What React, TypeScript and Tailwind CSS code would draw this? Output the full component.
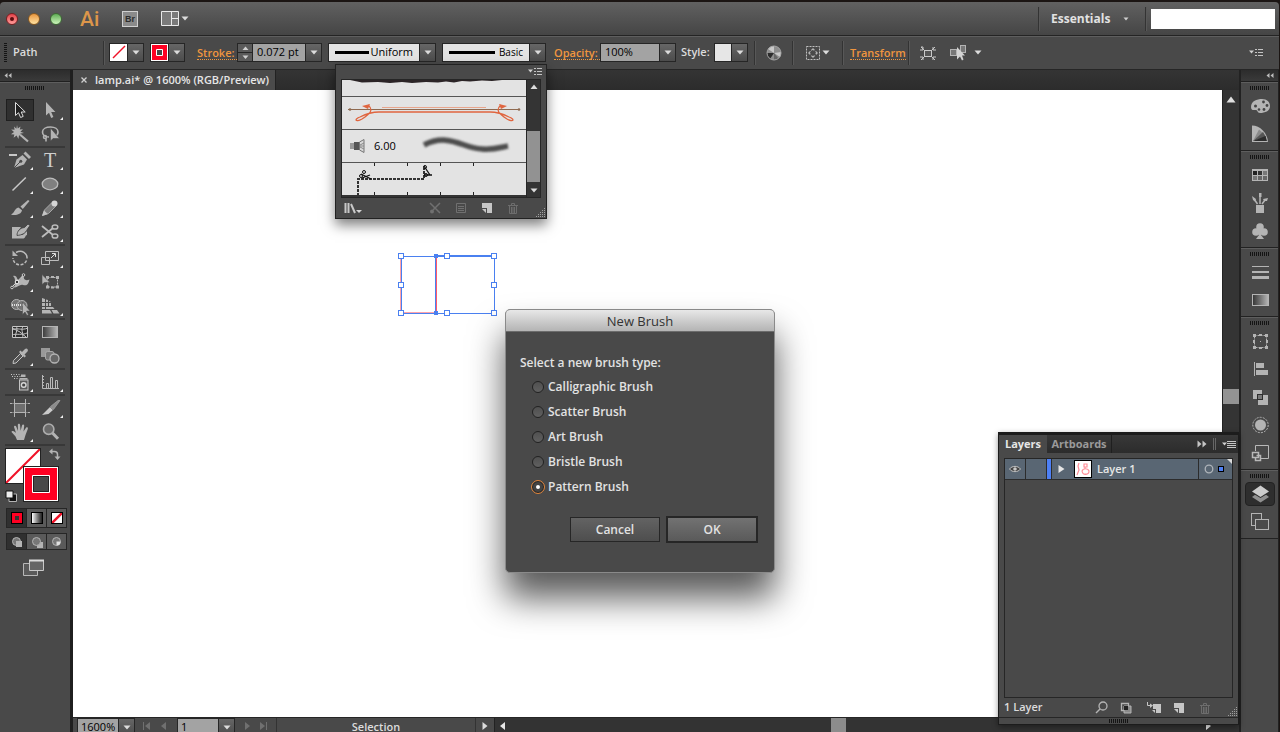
import { useState, type ReactNode } from "react";
import clsx from "clsx";

type IconProps = { w?: number; h?: number; children: ReactNode };

function Icon({ w = 24, h = 20, children }: IconProps) {
  return (
    <svg
      width={w}
      height={h}
      viewBox={`0 0 ${w} ${h}`}
      fill="#b4b4b4"
      aria-hidden="true"
      className="block shrink-0"
    >
      {children}
    </svg>
  );
}

function Down({ color = "#dcdcdc" }: { color?: string }) {
  return (
    <Icon w={8} h={5}>
      <path d="M0.5 0.5H7.5L4 4.5Z" fill={color} />
    </Icon>
  );
}

function MenuIcon() {
  return (
    <Icon w={14} h={9}>
      <path d="M0 2.5H5L2.5 5.5Z" fill="#d0d0d0" />
      <path d="M6 1.5H14M6 4.5H14M6 7.5H14" stroke="#c4c4c4" />
      <path d="M8.5 0V9" stroke="#494949" />
    </Icon>
  );
}

function Grip() {
  return (
    <Icon w={20} h={4}>
      <path d="M0 2H20" stroke="#141414" strokeWidth="4" strokeDasharray="1 1" />
    </Icon>
  );
}

function ResizeGrip() {
  return (
    <Icon w={10} h={10}>
      <path
        d="M9 1.5H10M7 3.5H10M5 5.5H10M3 7.5H10M1 9.5H10"
        stroke="#a0a0a0"
        strokeDasharray="1 1"
      />
    </Icon>
  );
}

function NewIcon() {
  return (
    <Icon w={12} h={12}>
      <path d="M1 1H11V11H6V6H1Z" fill="#c6c6c6" />
      <path d="M1 7H5V11Z" fill="#c6c6c6" />
    </Icon>
  );
}

function TrashIcon() {
  return (
    <Icon w={12} h={12}>
      <path d="M1 3.5H11M4.5 3V1.5H7.5V3M2.5 4V11.5H9.5V4M4.5 5V11M6 5V11M7.5 5V11" stroke="#6d6d6d" fill="none" />
    </Icon>
  );
}

/* Tool drawings */

const tools: Record<string, ReactNode> = {
  Selection: (
    <path d="M7.5 2.5V15.5L10.5 12.7L12.6 17.5L15.2 16.4L13.2 12H17.2Z" fill="#222" stroke="#dedede" />
  ),
  "Direct Selection": <path d="M8 2V15.5L11 12.8L13.2 18L15.4 17L13.2 12H17.4Z" />,
  "Magic Wand": (
    <>
      <path d="M9 1L9.8 4.5L12.5 2.5L11.8 5.6L15 5.2L12.4 7.7L16 9L12.3 9.6L14 12.6L11 11.2L10.4 15L8.6 11.6L5.6 13.8L6.4 10.4L3 10.2L6 8L3.2 5.4L6.6 5.8L6 2.4L8.4 4.8Z" />
      <path d="M12.5 11L20 17.5" stroke="#b4b4b4" strokeWidth="2.2" />
    </>
  ),
  Lasso: (
    <>
      <path d="M11 13C6 13 4.500 10 4.500 8C4.500 5 8 3 12.500 3C17 3 20 5 20 8C20 10 19 11.500 17 12.500M7 11.500C5 11.500 5 14.500 7 14.500C9 14.500 9 11.500 7 11.500M8 14.500V17.500" fill="none" stroke="#b4b4b4" strokeWidth="1.6" />
      <path d="M12.500 4V17L15 14.500H21.500Z" stroke="#494949" strokeWidth="0.6" />
    </>
  ),
  Pen: (
    <>
      <path d="M1 5H9" stroke="#c8c8c8" strokeWidth="2" />
      <path d="M6 18L8.500 9.500L14.500 5L19 9.500L16 14.500Z" />
      <path d="M15.500 3.500L17.500 1.500L23 7L21 9Z" />
      <path d="M6 18L12 12" stroke="#494949" />
      <circle cx="12.800" cy="11.200" r="1.500" fill="#494949" />
    </>
  ),
  "Line Segment": <path d="M4.500 16.500L17.800 3.500" stroke="#c8c8c8" strokeWidth="1.500" />,
  Ellipse: <ellipse cx="12" cy="10" rx="7.800" ry="5.800" fill="#808080" stroke="#bdbdbd" strokeWidth="1.300" />,
  Paintbrush: (
    <>
      <path d="M12.500 8.500L20 2L21.500 3L14.800 11Z" />
      <path d="M3 16.500C6.500 15 6.500 10.500 10.500 9.500L14 12.300C13.500 16.500 7 18 3 16.500Z" />
    </>
  ),
  Pencil: (
    <>
      <path d="M4.500 17.500L6.500 12L14 4.500L18 8L10.500 15.500Z" fill="#7c7c7c" stroke="#a8a8a8" />
      <path d="M4 18L6 12.500L9.800 16Z" fill="#c4c4c4" />
      <circle cx="16.500" cy="5.500" r="3" fill="#d6d6d6" />
    </>
  ),
  "Blob Brush": (
    <>
      <path d="M4 5H13L10 9.500V13H14.500L19 9V13C17 13 18 17 14 16.500H4V10Z" />
      <path d="M9 13.500C9 9 12 6 16.500 5.500L20 2L22 3.500L19.500 7C17.500 11.500 14 13 9 13.500Z" stroke="#3c3c3c" strokeWidth="0.800" />
    </>
  ),
  Scissors: (
    <>
      <path d="M4 4L15 13M4 15L15 6" stroke="#bcbcbc" strokeWidth="1.800" />
      <ellipse cx="17" cy="5" rx="2.800" ry="2.100" fill="none" stroke="#bcbcbc" strokeWidth="1.500" />
      <ellipse cx="17" cy="14" rx="2.800" ry="2.100" fill="none" stroke="#bcbcbc" strokeWidth="1.500" />
    </>
  ),
  Rotate: (
    <>
      <path d="M8 4.500C14 1 19.500 5.500 19 10.500" fill="none" stroke="#bcbcbc" strokeWidth="1.500" />
      <path d="M18.500 12.500C16 18.500 5.500 18.500 5 10" fill="none" stroke="#bcbcbc" strokeWidth="1.500" strokeDasharray="3 1.500" />
      <path d="M4.500 2.500V8H10Z" />
    </>
  ),
  Scale: (
    <>
      <path d="M7.500 3.500H20.500V12.500H7.500ZM3.500 9.500H11.500V16.500H3.500Z" fill="none" stroke="#bdbdbd" />
      <path d="M13 10L17 6M14 5.500H17.500V9" fill="none" stroke="#dedede" />
    </>
  ),
  Width: (
    <>
      <path d="M5 4C10 3 8 8 11 8C13 8 13 4 16 3C15 8 18 9 21.500 7.500C20 13 19 14 15 13C11 12 9 17 5 15C8 14 7 12 7 10C7 7 7 6 5 4Z" />
      <path d="M4 15L15 3.500" stroke="#e2e2e2" />
      <circle cx="9" cy="10" r="1.800" fill="#333" stroke="#eee" />
      <circle cx="4" cy="15.500" r="1.300" fill="#333" stroke="#ccc" />
      <circle cx="15.500" cy="3" r="1.300" fill="#333" stroke="#ccc" />
    </>
  ),
  "Free Transform": (
    <>
      <rect x="9.500" y="5.500" width="10" height="9.500" fill="none" stroke="#b4b4b4" strokeDasharray="2 1" />
      <path d="M8 4H11V7H8ZM18 4H21V7H18ZM18 13.500H21V16.500H18ZM8 13.500H11V16.500H8ZM13 4H16V6H13ZM13 14.500H16V16.500H13Z" />
      <path d="M4 2.500V12.500L6.500 10.500H12Z" stroke="#494949" strokeWidth="0.600" />
    </>
  ),
  "Shape Builder": (
    <>
      <circle cx="8.500" cy="8.500" r="5" fill="#757575" stroke="#b4b4b4" />
      <circle cx="14" cy="9.500" r="5" fill="#757575" stroke="#b4b4b4" />
      <path d="M4 9H15" stroke="#fff" strokeWidth="1.500" strokeDasharray="1 1" />
      <path d="M14.500 6V18.500L17 16L19 19.500L20.500 18.500L18.500 15H22Z" stroke="#494949" strokeWidth="0.500" />
    </>
  ),
  "Perspective Grid": (
    <>
      <path d="M4 2L7 3V13H4ZM8 3.500L10 4V13H8ZM11 5L13 6V10H11Z" />
      <path d="M4 6.500H14M4 10.500H10" stroke="#494949" />
      <path d="M4 14H12L14 17.500H4ZM9 11H15L16.500 13H10ZM13.500 14H19L21.500 17.500H15.500Z" />
    </>
  ),
  Mesh: (
    <>
      <rect x="4" y="4" width="16" height="12" fill="#2c2c2c" />
      <path d="M4.500 4.500H19.500V15.500H4.500ZM4 8C9 5 13 9 20 6M4 13C8 11 14 14 20 10.500M8 4C11 8 6 12 8 16M16 4C11 7 17 12 14 16M4 6L12 10L18 15" fill="none" stroke="#c6c6c6" />
    </>
  ),
  Gradient: (
    <>
      <linearGradient id="toolGradient">
        <stop offset="0" stopColor="#3a3a3a" />
        <stop offset="1" stopColor="#b8b8b8" />
      </linearGradient>
      <rect x="4.500" y="4.500" width="15" height="11" fill="url(#toolGradient)" stroke="#b4b4b4" />
    </>
  ),
  Eyedropper: (
    <>
      <path d="M5 17.500L5.500 14.500L12.500 7.500L15 10L8 17Z" fill="#555" stroke="#c4c4c4" />
      <path d="M11 6L12.500 4.500L14 6L17 3C18.500 1.500 21 3.500 19.500 5.500L16.500 8.500L18 10L16.500 11.500Z" />
    </>
  ),
  Blend: (
    <>
      <path d="M3 2H12V11H3Z" fill="#999" />
      <rect x="7.500" y="5.500" width="8.500" height="8.500" rx="2" fill="#777" stroke="#a8a8a8" />
      <circle cx="16.500" cy="12.500" r="4.500" fill="#666" stroke="#b4b4b4" strokeWidth="1.300" />
    </>
  ),
  "Symbol Sprayer": (
    <>
      <path d="M3 2.500H12M4 4.500H13M6 6.500H11" stroke="#c8c8c8" strokeDasharray="1 1.500" />
      <path d="M13 2.500H17.500V5H13ZM11.500 6H19.500V7.500H11.500Z" />
      <rect x="11.500" y="8" width="8.500" height="10" fill="#5c5c5c" stroke="#c4c4c4" />
      <circle cx="15.700" cy="13" r="2.300" fill="#444" stroke="#d6d6d6" strokeWidth="1.400" />
    </>
  ),
  "Column Graph": (
    <>
      <path d="M4.500 3V16.500H21M8.500 16V11.500H10.500V16M12.500 16V5.500H14.500V16M17.500 16V8.500H19.500V16" fill="none" stroke="#b8b8b8" />
      <path d="M4 4.500H6M4 7.500H6M4 10.500H6M4 13.500H6" stroke="#b8b8b8" />
    </>
  ),
  Artboard: (
    <>
      <path d="M6 5H18V15H6Z" fill="#6e6e6e" />
      <path d="M2 5.500H22M2 14.500H22M6.500 1V19M17.500 1V19" stroke="#b4b4b4" />
      <path d="M4.500 5H5.500M4.500 15H5.500M18.500 5H19.500M18.500 15H19.500" stroke="#494949" strokeWidth="3" />
    </>
  ),
  Slice: (
    <>
      <path d="M4 17L12 9L15 12L10.500 16Z" fill="#cacaca" />
      <path d="M12.500 8.500L20 2.500H22L15.500 11.500Z" fill="#8c8c8c" stroke="#b0b0b0" strokeWidth="0.600" />
    </>
  ),
  Hand: (
    <path d="M9 18L7.500 14.500L3.500 10C3.500 8.500 5.500 8.500 8 11L6 5C6 3.500 7.800 3.200 8.300 4.800L10 9L9.800 3C9.800 1.400 12 1.400 12.100 3L12.600 8.800L14 3.400C14.500 2 16.400 2.500 16.200 4L15.500 9.500L18 5.800C19 4.800 20.300 5.600 19.800 6.900L17.500 13L16 18Z" />
  ),
  Zoom: (
    <>
      <path d="M14 10.500L20 16.800" stroke="#b4b4b4" strokeWidth="3" />
      <circle cx="10.700" cy="7.200" r="5.200" fill="#6a6a6a" stroke="#adadad" strokeWidth="1.600" />
    </>
  ),
};

const toolGroups: string[][] = [
  ["Selection", "Direct Selection", "Magic Wand", "Lasso"],
  ["Pen", "Type", "Line Segment", "Ellipse", "Paintbrush", "Pencil", "Blob Brush", "Scissors"],
  ["Rotate", "Scale", "Width", "Free Transform", "Shape Builder", "Perspective Grid"],
  ["Mesh", "Gradient", "Eyedropper", "Blend"],
  ["Symbol Sprayer", "Column Graph"],
  ["Artboard", "Slice", "Hand", "Zoom"],
];

const noFlyout = [
  "Selection",
  "Magic Wand",
  "Lasso",
  "Blob Brush",
  "Free Transform",
  "Mesh",
  "Gradient",
  "Blend",
  "Artboard",
  "Zoom",
];

/* Dock drawings */

const dockGroups: { name: string; icon: ReactNode }[][] = [
  [
    {
      name: "Color",
      icon: (
        <>
          <path d="M1 11C1 5 7 3 12 3C17 3 20 6 20 10C20 15 15 17 10 17C7 17 8 14 6 14C4 14 1 15 1 11Z" />
          <g fill="#444">
            <circle cx="5.500" cy="10" r="1.500" />
            <circle cx="9" cy="13.500" r="1.300" />
            <circle cx="14" cy="13.500" r="1.400" />
            <circle cx="17" cy="9.500" r="1.400" />
            <circle cx="13.500" cy="6" r="1.400" />
          </g>
        </>
      ),
    },
    {
      name: "Color Guide",
      icon: (
        <>
          <path d="M2 1.500C10 1.500 17.500 9 18 18H2Z" />
          <path d="M3 17L9 5.500L13 9Z" fill="#8a8a8a" />
          <path d="M3 17L13 8L16 13Z" fill="#555" />
          <path d="M3 17L15.500 12L17 17Z" fill="#2c2c2c" />
        </>
      ),
    },
  ],
  [
    {
      name: "Swatches",
      icon: (
        <>
          <path d="M2 4H18V16H2Z" />
          <path d="M3 6H7V10H3Z" fill="#222" />
          <path d="M8 6H12V10H8Z" fill="#333" />
          <path d="M13 6H17V10H13ZM3 11H7V15H3Z" fill="#777" />
          <path d="M8 11H12V15H8ZM13 11H17V15H13Z" fill="#666" />
        </>
      ),
    },
    {
      name: "Brushes",
      icon: (
        <>
          <path d="M6 12H14V20H6Z" />
          <path d="M7.500 11L4 6M10 11V3M12 11L15 7" stroke="#b4b4b4" strokeWidth="1.500" />
          <path d="M2 3L6 6L5 8.500L3 7ZM9 0H11.500V4H9ZM13 6L18 5L17 8H14Z" />
        </>
      ),
    },
    {
      name: "Symbols",
      icon: (
        <>
          <circle cx="10" cy="6" r="3.800" />
          <circle cx="6" cy="11" r="3.800" />
          <circle cx="14" cy="11" r="3.800" />
          <path d="M8 8H12L11 14L14 18H6L9 14Z" />
        </>
      ),
    },
  ],
  [
    { name: "Stroke", icon: <path d="M2 4H19V5H2ZM2 9H19V11H2ZM2 14H19V17H2Z" /> },
    {
      name: "Gradient",
      icon: (
        <>
          <linearGradient id="dockGradient">
            <stop offset="0" stopColor="#333" />
            <stop offset="1" stopColor="#b8b8b8" />
          </linearGradient>
          <rect x="2.500" y="4.500" width="16" height="11" fill="url(#dockGradient)" stroke="#b4b4b4" />
        </>
      ),
    },
  ],
  [
    {
      name: "Transform",
      icon: (
        <>
          <rect x="4.500" y="4.500" width="12" height="12" fill="none" stroke="#b4b4b4" strokeDasharray="2 1" />
          <path d="M3 3H6V6H3ZM9 3H12V5H9ZM15 3H18V6H15ZM3 15H6V18H3ZM9 16H12V18H9ZM15 15H18V18H15ZM3 9H5V12H3ZM16 9H18V12H16ZM10 10H11V11H10Z" />
        </>
      ),
    },
    { name: "Align", icon: <path d="M4 3H5V17H4ZM6 4H14V9H6ZM6 11H18V16H6Z" /> },
    {
      name: "Pathfinder",
      icon: (
        <>
          <path d="M3 3H12V12H3ZM8 8H18V18H8Z" />
          <rect x="7.500" y="7.500" width="5" height="5" fill="#777" stroke="#2c2c2c" />
        </>
      ),
    },
    {
      name: "Appearance",
      icon: (
        <>
          <circle cx="10.500" cy="10" r="5.500" />
          <circle cx="10.500" cy="10" r="7.700" fill="none" stroke="#b4b4b4" strokeDasharray="2 1.200" />
        </>
      ),
    },
    {
      name: "Graphic Styles",
      icon: (
        <>
          <path d="M5.500 8V2.500H18.500V15.500H11" fill="none" stroke="#b8b8b8" />
          <path d="M2.500 9.500H8.500V14.500H2.500ZM6.500 12.500H10.500V17.500H5.500V14" fill="none" stroke="#b8b8b8" strokeWidth="1.500" />
        </>
      ),
    },
  ],
  [
    {
      name: "Layers",
      icon: (
        <>
          <path d="M2 13L5 10.800L10.500 14L16 10.800L19 13L10.500 18.500Z" fill="#909090" />
          <path d="M10.500 1.500L19 7.500L10.500 13L2 7.500Z" fill="#cdcdcd" />
        </>
      ),
    },
    {
      name: "Artboards",
      icon: (
        <>
          <rect x="1.500" y="1.500" width="10" height="12" fill="none" stroke="#b4b4b4" />
          <rect x="5.500" y="7.500" width="13" height="10" fill="#4a4a4a" stroke="#b4b4b4" />
        </>
      ),
    },
  ],
];

function DropButton({ label }: { label: string }) {
  return (
    <button
      aria-label={label}
      className="flex h-full w-4 shrink-0 items-center justify-center border-l border-[#262626] bg-linear-to-b from-[#666] to-[#4c4c4c]"
    >
      <Down />
    </button>
  );
}

function Divider() {
  return <span className="block h-6 w-[2px] shrink-0 border-l border-[#333] bg-[#585858]" />;
}

function PanelLink({ children }: { children: ReactNode }) {
  return (
    <a href="#" className="mt-px block shrink-0 border-b border-dotted border-[#f0963f] leading-[13px] text-[#f0963f]">
      {children}
    </a>
  );
}

function TitleBar() {
  return (
    <header className="flex h-[34px] shrink-0 items-center rounded-t border-b border-[#242424] bg-linear-to-b from-[#616161] to-[#454545] pl-1.5">
      <div className="flex gap-[10px]">
        <button aria-label="Close" className="flex size-3 items-center justify-center rounded-full border border-[#7a1f22] bg-linear-to-b from-[#e23f48] to-[#ff9a9a]">
          <span className="size-1 rounded-full bg-[#5b0c10]" />
        </button>
        <button aria-label="Minimize" className="size-3 rounded-full border border-[#8a5a22] bg-linear-to-b from-[#e8963c] to-[#ffe2a0]" />
        <button aria-label="Zoom" className="size-3 rounded-full border border-[#3d6a34] bg-linear-to-b from-[#5fae55] to-[#cdf5bc]" />
      </div>
      <span className="ml-[18px] w-6 font-['Roboto',sans-serif] text-[21px] leading-[30px] font-medium text-[#dd964a]">
        Ai
      </span>
      <button className="ml-[18px] flex size-4 items-center justify-center border border-[#d0d0d0] bg-[#8b8b8b] font-['Liberation_Sans',sans-serif] text-[9px] leading-3 font-bold text-[#2e2e2e]">
        Br
      </button>
      <button aria-label="Arrange Documents" className="ml-[23px] flex items-center gap-[2px]">
        <Icon w={18} h={15}>
          <path d="M0.500 0.500H17.500V14.500H0.500Z" fill="#7b7b7b" stroke="#eaeaea" />
          <path d="M10.500 1V14M10.500 7.500H17" stroke="#eaeaea" />
        </Icon>
        <Down />
      </button>
      <div className="ml-auto flex items-center">
        <Divider />
        <select
          aria-label="Workspace"
          className="ml-[11px] w-[68px] appearance-none text-[12px] leading-4 font-bold text-[#e2e2e2]"
        >
          <option>Essentials</option>
        </select>
        <span className="ml-1">
          <Icon w={6} h={4}>
            <path d="M0.500 0.500H5.500L3 3.500Z" fill="#d0d0d0" />
          </Icon>
        </span>
        <span className="ml-4">
          <Divider />
        </span>
        <input aria-label="Search" className="mr-1 ml-1 h-5 w-[124px] bg-white px-1 text-[11px] text-black outline-none" />
      </div>
    </header>
  );
}

function ControlBar() {
  return (
    <div className="flex h-[34px] shrink-0 items-center border-t border-b border-t-[#5e5e5e] border-b-[#262626] bg-[#494949] pb-px pl-1 text-[11px] font-semibold text-[#dcdcdc]">
      <Icon w={3} h={19}>
        <path d="M1.500 0V19" stroke="#141414" strokeWidth="3" strokeDasharray="1 1" />
      </Icon>
      <span className="ml-1.5 w-[90px] shrink-0">Path</span>
      <Divider />
      <div className="ml-1 flex h-[19px] w-[35px] shrink-0 border border-[#262626]">
        <span className="w-[17px] bg-white">
          <Icon w={17} h={17}>
            <path d="M3 14L15 2" stroke="#f01228" strokeWidth="1.500" />
          </Icon>
        </span>
        <DropButton label="Fill" />
      </div>
      <div className="ml-1.5 flex h-[19px] w-[35px] shrink-0 border border-[#262626]">
        <span className="w-[17px] bg-white">
          <Icon w={17} h={17}>
            <path d="M1 1H16V16H1Z" fill="#ff0022" />
            <path d="M5.500 5.500H11.500V11.500H5.500Z" fill="#494949" stroke="#fff" />
          </Icon>
        </span>
        <DropButton label="Stroke colour" />
      </div>
      <span className="ml-3 w-10 shrink-0">
        <PanelLink>Stroke:</PanelLink>
      </span>
      <div className="flex h-[19px] w-[85px] shrink-0 border border-[#262626]">
        <div className="flex w-[15px] shrink-0 flex-col border-r border-[#262626] bg-[#5a5a5a]">
          <button aria-label="Increase stroke" className="flex h-[9px] items-center justify-center border-b border-[#262626]">
            <Icon w={7} h={4}>
              <path d="M0.500 4H6.500L3.500 0.500Z" fill="#d0d0d0" />
            </Icon>
          </button>
          <button aria-label="Decrease stroke" className="flex h-2 items-center justify-center">
            <Icon w={7} h={4}>
              <path d="M0.500 0.500H6.500L3.500 4Z" fill="#d0d0d0" />
            </Icon>
          </button>
        </div>
        <input aria-label="Stroke weight" defaultValue="0.072 pt" className="w-[52px] bg-[#a3a3a3] pl-1 text-[11px] font-normal text-black outline-none" />
        <DropButton label="Stroke weight presets" />
      </div>
      <div className="ml-1.5 flex h-[19px] w-[108px] shrink-0 border border-[#262626] bg-[#e3e3e3]">
        <span className="mt-[7px] ml-1.5 h-[3px] w-[34px] shrink-0 bg-black" />
        <select aria-label="Width profile" className="flex-1 appearance-none pr-1.5 text-right text-[11px] font-normal text-black">
          <option>Uniform</option>
        </select>
        <DropButton label="Width profiles" />
      </div>
      <div className="ml-1.5 flex h-[19px] w-[104px] shrink-0 border border-[#262626] bg-[#e3e3e3]">
        <span className="mt-[7px] ml-1.5 h-[3px] w-[46px] shrink-0 bg-black" />
        <select aria-label="Brush definition" className="flex-1 appearance-none pr-1.5 text-right text-[10px] font-normal text-black">
          <option>Basic</option>
        </select>
        <DropButton label="Brushes" />
      </div>
      <span className="ml-2 w-[46px] shrink-0">
        <PanelLink>Opacity:</PanelLink>
      </span>
      <div className="flex h-[19px] w-[76px] shrink-0 border border-[#262626]">
        <input aria-label="Opacity" defaultValue="100%" className="min-w-0 flex-1 bg-[#a3a3a3] pl-1 text-[11px] font-normal text-black outline-none" />
        <DropButton label="Opacity presets" />
      </div>
      <span className="ml-[5px] w-[33px] shrink-0">Style:</span>
      <div className="flex h-[19px] w-[34px] shrink-0 border border-[#262626]">
        <span className="w-[16px] bg-[#e6e6e6]" />
        <DropButton label="Graphic style" />
      </div>
      <div className="flex flex-1 items-center pl-1.5">
        <Divider />
        <button aria-label="Recolor Artwork" className="ml-[10px]">
          <Icon w={16} h={16}>
            <circle cx="8" cy="8" r="7" fill="#8d8d8d" />
            <path d="M8 8L2 4A7 7 0 0 1 8 1ZM8 8L14 12A7 7 0 0 0 15 7Z" fill="#c8c8c8" />
            <path d="M8 8L4 14A7 7 0 0 1 1 8Z" fill="#2c2c2c" />
            <path d="M8 8V15A7 7 0 0 0 12.500 13.500Z" fill="#666" />
            <circle cx="8" cy="8" r="7" fill="none" stroke="#a4a4a4" />
          </Icon>
        </button>
        <span className="ml-[10px]">
          <Divider />
        </span>
        <button aria-label="Align To" className="ml-3 flex items-center gap-[2px]">
          <Icon w={14} h={14}>
            <rect x="0.500" y="0.500" width="13" height="13" fill="none" stroke="#c0c0c0" strokeDasharray="2 1" />
            <path d="M7 2L9 4H5ZM7 12L9 10H5ZM2 7L4 5V9ZM12 7L10 5V9Z" />
            <circle cx="7" cy="7" r="3" fill="none" stroke="#b4b4b4" strokeDasharray="1 1" />
          </Icon>
          <Down />
        </button>
        <span className="ml-3">
          <Divider />
        </span>
        <span className="ml-1.5">
          <PanelLink>Transform</PanelLink>
        </span>
        <span className="ml-[2px]">
          <Divider />
        </span>
        <button aria-label="Isolate" className="ml-[10px]">
          <Icon w={16} h={16}>
            <rect x="4.500" y="5.500" width="7" height="6" fill="#555" stroke="#c8c8c8" />
            <path d="M1 2L4 5M1 2H3M15 2L12 5M1 15L4 12M15 15L12 12M0 5L3 5V2M16 5H13V2M0 12H3V15M16 12H13V15" fill="none" stroke="#c8c8c8" />
          </Icon>
        </button>
        <button aria-label="Select Similar" className="ml-3.5 flex items-center gap-[7px]">
          <Icon w={17} h={16}>
            <rect x="0.500" y="4.500" width="6" height="6" fill="#777" stroke="#b4b4b4" />
            <rect x="10.500" y="0.500" width="5" height="7" fill="#777" stroke="#b4b4b4" />
            <path d="M7 2V14.500L10 11.500L12 15.500L13.500 14.500L12 10.500H15Z" fill="#d4d4d4" />
          </Icon>
          <Down />
        </button>
        <button aria-label="Control panel menu" className="mr-4 ml-auto">
          <MenuIcon />
        </button>
      </div>
    </div>
  );
}

function CollapseBar({ right = false }: { right?: boolean }) {
  return (
    <button
      aria-label="Collapse panel"
      className={clsx(
        "flex h-3 w-full shrink-0 items-center border-b border-[#202020] bg-linear-to-b from-[#2c2c2c] to-[#3a3a3a] px-1",
        right && "justify-end",
      )}
    >
      <Icon w={8} h={5}>
        <path d="M3.500 0V5L0.500 2.500ZM7.500 0V5L4.500 2.500Z" fill="#bdbdbd" />
      </Icon>
    </button>
  );
}

function Toolbox() {
  const [active, setActive] = useState("Selection");

  return (
    <aside className="flex w-[73px] shrink-0 flex-col border-r-3 border-[#1f1f1f] bg-[#494949]">
      <CollapseBar />
      <div className="flex h-4 shrink-0 justify-center border-t border-[#5e5e5e] pt-[3px]">
        <Grip />
      </div>
      <div className="px-[5px]">
        {toolGroups.map((group) => (
          <div key={group[0]} className="grid grid-cols-2 border-b-2 border-[#383838]">
            {group.map((name) => (
              <button
                key={name}
                aria-label={name}
                onClick={() => setActive(name)}
                className="relative flex h-6 items-center justify-center"
              >
                <span
                  className={clsx(
                    "flex h-[22px] w-7 items-center justify-center",
                    active === name && "border border-[#1f1f1f] bg-[#303030]",
                  )}
                >
                  {name === "Type" ? (
                    <span className="font-['Liberation_Serif',serif] text-[20px] leading-5 text-[#cfcfcf]">T</span>
                  ) : (
                    <Icon>{tools[name]}</Icon>
                  )}
                </span>
                {!noFlyout.includes(name) && (
                  <span className="absolute right-[2px] bottom-[2px]">
                    <Icon w={3} h={3}>
                      <path d="M3 0V3H0Z" fill="#f0f0f0" />
                    </Icon>
                  </span>
                )}
              </button>
            ))}
          </div>
        ))}
      </div>
      <div className="relative mx-[5px] mt-[2px] h-[54px] shrink-0">
        <button aria-label="Fill" className="block border border-[#222] bg-white">
          <Icon w={34} h={34}>
            <path d="M0 34L34 0" stroke="#f01228" strokeWidth="2" />
          </Icon>
        </button>
        <button aria-label="Stroke" className="absolute top-[18px] left-[18px] border border-[#222] bg-white">
          <Icon w={34} h={34}>
            <path d="M1 1H33V33H1Z" fill="#ff0022" />
            <path d="M8.500 8.500H25.500V25.500H8.500Z" fill="#494949" stroke="#fff" />
            <path d="M9.500 9.500H24.500V24.500H9.500Z" fill="none" stroke="#222" />
          </Icon>
        </button>
        <button aria-label="Swap Fill and Stroke" className="absolute top-0 right-1">
          <Icon w={12} h={12}>
            <path d="M3 3.500H5.500C7.500 3.500 8.500 4.500 8.500 6.500V9" fill="none" stroke="#b4b4b4" strokeWidth="1.500" />
            <path d="M0 3.500L3.500 0.500V6.500ZM8.500 12L5.500 8.500H11.500Z" />
          </Icon>
        </button>
        <button aria-label="Default Fill and Stroke" className="absolute bottom-0 left-0">
          <Icon w={12} h={12}>
            <path d="M4 4H11.500V11.500H4Z" fill="#111" stroke="#b4b4b4" />
            <path d="M1 1H8V8H1Z" fill="#eee" stroke="#111" />
          </Icon>
        </button>
      </div>
      <div className="mt-[6px] mr-[3px] ml-1.5 flex h-5 shrink-0 border border-[#262626]">
        <button aria-label="Color" className="flex flex-1 items-center justify-center bg-[#303030]">
          <span className="flex size-3 items-center justify-center border border-black bg-[#ff0022]">
            <span className="size-1 bg-[#333]" />
          </span>
        </button>
        <button aria-label="Gradient" className="flex flex-1 items-center justify-center border-x border-[#262626] bg-[#5a5a5a]">
          <span className="size-3 border border-black bg-linear-to-r from-white to-[#222]" />
        </button>
        <button aria-label="None" className="flex flex-1 items-center justify-center bg-[#5a5a5a]">
          <span className="border border-black bg-white">
            <Icon w={10} h={10}>
              <path d="M0 10L10 0" stroke="#f01228" strokeWidth="2.500" />
            </Icon>
          </span>
        </button>
      </div>
      <div className="mt-[5px] mr-[3px] ml-1.5 flex h-[17px] shrink-0 border border-[#262626]">
        {["Draw Normal", "Draw Behind", "Draw Inside"].map((mode, i) => (
          <button
            key={mode}
            aria-label={mode}
            className={clsx(
              "flex flex-1 items-center justify-center",
              i === 0 ? "bg-[#303030]" : "border-l border-[#262626] bg-[#5a5a5a]",
            )}
          >
            <Icon w={12} h={12}>
              {i === 1 && <path d="M6 6H12V12H6Z" />}
              <circle cx="5.500" cy="5.500" r="4" fill="#777" stroke="#b4b4b4" />
              {i === 0 && <path d="M5 5H11V11H5Z" />}
              {i === 2 && <path d="M5.500 5.500H9.500A4 4 0 0 1 5.500 9.500Z" fill="#e0e0e0" />}
            </Icon>
          </button>
        ))}
      </div>
      <button aria-label="Change Screen Mode" className="mt-[9px] ml-[23px] self-start">
        <Icon w={22} h={17}>
          <path d="M0.500 4.500H14.500V16.500H0.500Z" fill="#5a5a5a" stroke="#b8b8b8" />
          <path d="M6.500 1.500H20.500V11.500H6.500Z" fill="#666" stroke="#c8c8c8" />
          <path d="M6 1.500H21" stroke="#dcdcdc" strokeWidth="2" />
        </Icon>
      </button>
    </aside>
  );
}

function Dock() {
  return (
    <aside className="flex w-10 shrink-0 flex-col border-x-2 border-r border-[#222] bg-[#494949]">
      <CollapseBar right />
      {dockGroups.map((group) => (
        <section
          key={group[0].name}
          className="flex shrink-0 flex-col items-center border-t border-b border-t-[#5e5e5e] border-b-[#222] pt-[3px] pb-[2px]"
        >
          <Grip />
          <div className="mt-[2px]">
            {group.map(({ name, icon }) => (
              <button key={name} aria-label={name} className="flex h-7 items-center">
                <span
                  className={clsx(
                    "flex h-6 w-[30px] items-center justify-center rounded-sm",
                    name === "Layers" && "border border-[#222] bg-[#2e2e2e]",
                  )}
                >
                  <Icon w={20} h={20}>
                    {icon}
                  </Icon>
                </span>
              </button>
            ))}
          </div>
        </section>
      ))}
    </aside>
  );
}

function Artwork() {
  const handles = [
    [4, 4], [50, 4], [97, 4], [4, 33], [97, 33], [4, 61], [50, 61], [97, 61],
  ];
  return (
    <svg width="102" height="66" viewBox="0 0 102 66" className="absolute top-[162px] left-[324px]" aria-label="Selected path" role="img">
      <path d="M3.500 4V61M4 60.500H39" stroke="#ffa3aa" />
      <path d="M39.500 4V61" stroke="#ff5b6a" />
      <path d="M4.500 4.500H97.500V61.500H4.500ZM38.500 4V61" fill="none" stroke="#4a80f0" />
      <path d="M39 4H97" stroke="#4a80f0" strokeWidth="2" />
      <path d="M37 2H41V6H37ZM37 59H41V63H37Z" fill="#4a80f0" />
      {handles.map(([x, y]) => (
        <rect key={`${x}-${y}`} x={x - 2.5} y={y - 2.5} width="5" height="5" fill="#fff" stroke="#4a80f0" />
      ))}
    </svg>
  );
}

function StatusBar() {
  return (
    <footer className="flex h-[15px] shrink-0 items-start overflow-hidden border-t border-[#262626] bg-[#494949] text-[11px] leading-[18px] text-[#dcdcdc]">
      <div className="ml-1 flex h-[18px] w-[58px] shrink-0 border border-[#262626]">
        <input aria-label="Zoom level" defaultValue="1600%" className="min-w-0 flex-1 bg-[#a3a3a3] pl-[3px] text-black outline-none" />
        <DropButton label="Zoom presets" />
      </div>
      <button aria-label="First artboard" className="mt-1 ml-[7px]">
        <Icon w={10} h={8}>
          <path d="M1 0H2V8H1ZM8 0V8L3 4Z" fill="#707070" />
        </Icon>
      </button>
      <button aria-label="Previous artboard" className="mt-1 ml-2">
        <Icon w={8} h={8}>
          <path d="M6 0V8L1 4Z" fill="#707070" />
        </Icon>
      </button>
      <div className="ml-[9px] flex h-[18px] w-[58px] shrink-0 border border-[#262626]">
        <input aria-label="Artboard" defaultValue="1" className="min-w-0 flex-1 bg-[#a3a3a3] pl-[3px] text-black outline-none" />
        <DropButton label="Artboard list" />
      </div>
      <button aria-label="Next artboard" className="mt-1 ml-[9px]">
        <Icon w={8} h={8}>
          <path d="M1 0V8L6 4Z" fill="#707070" />
        </Icon>
      </button>
      <button aria-label="Last artboard" className="mt-1 ml-[7px]">
        <Icon w={10} h={8}>
          <path d="M1 0V8L6 4ZM7 0H8V8H7Z" fill="#707070" />
        </Icon>
      </button>
      <span className="ml-[7px] w-[200px] shrink-0 border-x border-[#333] text-center font-semibold">Selection</span>
      <button aria-label="Status menu" className="flex h-4 w-[18px] shrink-0 items-center justify-center">
        <Icon w={6} h={8}>
          <path d="M0.500 0V8L5.500 4Z" fill="#dcdcdc" />
        </Icon>
      </button>
      <div className="flex h-4 flex-1 items-center justify-between border-l border-[#222] bg-[#333] pr-[26px] pl-1">
        <Icon w={8} h={8}>
          <path d="M6 0V8L1 4Z" fill="#e6e6e6" />
        </Icon>
        <Icon w={8} h={8}>
          <path d="M1 0V8L6 4Z" fill="#e6e6e6" />
        </Icon>
      </div>
    </footer>
  );
}

function DocumentArea() {
  return (
    <main className="flex min-w-0 flex-1 flex-col">
      <div className="flex h-5 shrink-0 bg-linear-to-b from-[#343434] to-[#2c2c2c]">
        <div className="flex w-[203px] items-center border-r border-[#222] bg-[#4b4b4b] pl-2 text-[11px] font-semibold text-[#e6e6e6]">
          <button aria-label="Close document" className="mr-2">
            <Icon w={6} h={6}>
              <path d="M0.500 0.500L5.500 5.500M5.500 0.500L0.500 5.500" stroke="#d0d0d0" strokeWidth="1.300" />
            </Icon>
          </button>
          <h1 className="whitespace-nowrap">lamp.ai* @ 1600% (RGB/Preview)</h1>
        </div>
      </div>
      <div className="flex min-h-0 flex-1">
        <div className="relative min-w-0 flex-1 overflow-hidden bg-white">
          <Artwork />
        </div>
        <div className="flex w-[17px] shrink-0 flex-col items-center border-l border-[#222] bg-[#343434] pt-1.5">
          <Icon w={10} h={7}>
            <path d="M0.500 6.500H9.500L5 0.500Z" fill="#e0e0e0" />
          </Icon>
          <span className="mt-[286px] h-[15px] w-full bg-[#939393]" />
        </div>
      </div>
      <div className="relative">
        <StatusBar />
        <span className="absolute top-px left-[65%] h-3.5 w-[15px] bg-[#8c8c8c]" />
      </div>
    </main>
  );
}

function BrushesPanel() {
  return (
    <section aria-label="Brushes" className="absolute top-16 left-[335px] flex w-[212px] flex-col border border-[#222] bg-[#494949] shadow-[0_6px_12px_rgba(0,0,0,0.5)]">
      <button aria-label="Brushes menu" className="mt-[2px] mr-1 mb-[3px] self-end">
        <MenuIcon />
      </button>
      <div className="mx-[5px] flex h-[119px] border border-[#262626] bg-[#343434]">
        <ul className="mb-[2px] flex-1 overflow-hidden bg-[#e3e3e3]">
          <li className="h-[17px] border-b border-[#555]">
            <Icon w={184} h={16}>
              <path d="M8 0H160L150 1L140 0.500L128 1.500L120 1L112 2.500L104 1.500L96 2.500L84 2L70 3L60 2L48 3L36 2L20 2.500Z" fill="#2b2426" />
            </Icon>
          </li>
          <li className="h-[33px] border-b border-[#555]">
            <Icon w={184} h={32}>
              <g fill="none" stroke="#e0653f">
                <path d="M6 12.500H178" stroke="#8f6a50" />
                <path d="M40 10.500H144" stroke="#e8a58c" />
                <path d="M37 15H148" strokeWidth="1.500" />
                <path d="M26 8C32 13 28 17 20 22C13 26 12 22 18 20C24 17 30 15 37 15M159 8C153 13 157 17 165 22C172 26 173 22 167 20C161 17 155 15 148 15" strokeWidth="1.300" />
              </g>
              <path d="M20 9L28 7L26 12ZM165 9L157 7L159 12Z" fill="#e0653f" />
              <circle cx="8" cy="12.500" r="1.300" fill="#8f6a50" />
              <circle cx="177" cy="12.500" r="1.300" fill="#8f6a50" />
            </Icon>
          </li>
          <li className="flex h-[33px] items-center border-b border-[#555] pl-2 text-[11px] text-black">
            <Icon w={18} h={16}>
              <path d="M0 5H4V11H0Z" fill="#999" />
              <path d="M4 4H9V12H4Z" fill="#555" />
              <path d="M9.500 4L14 1.500V14.500L9.500 12Z" fill="#d8d8d8" stroke="#777" />
              <path d="M10 7L14 5M10 8H14M10 9L14 11" stroke="#888" />
            </Icon>
            <span className="ml-1.5 w-[40px]">6.00</span>
            <svg width="100" height="24" viewBox="0 0 100 24" aria-hidden="true">
              <defs>
                <filter id="soft" x="-10%" y="-50%" width="120%" height="200%">
                  <feGaussianBlur stdDeviation="1.1" />
                </filter>
              </defs>
              <path d="M10 11C35 -2 50 15 68 15C80 16 88 13 94 12" fill="none" stroke="#4d4d4d" strokeWidth="5.500" filter="url(#soft)" />
            </svg>
          </li>
          <li>
            <Icon w={184} h={33}>
              <path d="M32.500 0V3M65.500 0V3M98.500 0V3M131.500 0V3M32.500 29V33M65.500 29V33M98.500 29V33M131.500 29V33" stroke="#222" />
              <path d="M16 33V16H82V5" fill="none" stroke="#333" strokeWidth="2" strokeDasharray="3 1" />
              <g fill="none" stroke="#111">
                <path d="M19 11L29 16M20 15L28 12" strokeWidth="1.300" />
                <circle cx="22" cy="9" r="1.500" />
                <circle cx="19" cy="13" r="1.500" />
                <path d="M82 3L88 12M82 12L90 12" strokeWidth="1.300" />
                <circle cx="83" cy="4" r="1.500" />
                <circle cx="84" cy="12" r="1.500" />
              </g>
            </Icon>
          </li>
        </ul>
        <div className="flex w-[14px] flex-col items-center border-l border-[#262626] pt-1 pb-1">
          <Icon w={8} h={5}>
            <path d="M0.500 5H7.500L4 0.500Z" fill="#dedede" />
          </Icon>
          <span className="mt-auto mb-1.5 h-[51px] w-full bg-[#929292]" />
          <Down />
        </div>
      </div>
      <div className="flex h-[20px] items-center pl-2">
        <button aria-label="Brush Libraries">
          <Icon w={20} h={12}>
            <path d="M1.500 1V11M4.500 1V11M7 2L11 11" stroke="#c8c8c8" strokeWidth="2" />
            <path d="M12 8H18L15 11Z" fill="#d4d4d4" />
          </Icon>
        </button>
        <button aria-label="Remove Brush Stroke" className="ml-auto">
          <Icon w={12} h={12}>
            <path d="M1 1L11 11M11 1L4 8" stroke="#707070" strokeWidth="1.500" />
            <circle cx="3" cy="9.500" r="2" fill="#707070" />
          </Icon>
        </button>
        <button aria-label="Brush Options" className="ml-3.5">
          <Icon w={12} h={12}>
            <path d="M1.500 1.500H10.500V10.500H1.500Z" fill="none" stroke="#707070" />
            <path d="M3 4.500H9M3 6.500H9M3 8.500H9" stroke="#707070" />
          </Icon>
        </button>
        <button aria-label="New Brush" className="ml-3.5">
          <NewIcon />
        </button>
        <button aria-label="Delete Brush" className="ml-3.5">
          <TrashIcon />
        </button>
        <span className="mr-px ml-4 self-end pb-px">
          <ResizeGrip />
        </span>
      </div>
    </section>
  );
}

function LayersPanel() {
  return (
    <section aria-label="Layers" className="absolute right-[41px] bottom-[7px] flex w-[241px] flex-col border-x border-t-3 border-b border-[#1c1c1c] bg-[#494949] shadow-[0_2px_6px_rgba(0,0,0,0.4)]">
      <div className="flex h-[18px] items-stretch bg-linear-to-b from-[#383838] to-[#2c2c2c] text-[11px] leading-4 font-bold">
        <button className="w-12 bg-[#494949] text-[#e6e6e6]">Layers</button>
        <button className="w-[65px] border-r border-[#1f1f1f] text-[#9a9a9a]">Artboards</button>
        <div className="ml-auto flex items-center gap-1.5 pr-[2px]">
          <button aria-label="Collapse to icons">
            <Icon w={10} h={8}>
              <path d="M0.500 0.500V7.500L4.500 4ZM5.500 0.500V7.500L9.500 4Z" fill="#c4c4c4" />
            </Icon>
          </button>
          <span className="h-3 w-[3px] border-x border-[#666]" />
          <button aria-label="Layers menu">
            <Icon w={14} h={9}>
              <path d="M0 2.500H5L2.500 5.500Z" fill="#d0d0d0" />
              <path d="M5 1.500H14M5 3.500H14M5 5.500H14M5 7.500H14" stroke="#c4c4c4" />
            </Icon>
          </button>
        </div>
      </div>
      <div className="mx-[5px] mt-[5px] h-[240px] border border-[#262626]">
        <div className="flex h-[21px] items-stretch border-b border-[#2c2c2c] bg-[#596673] text-[11px] leading-5 text-[#e6e6e6]">
          <button aria-label="Toggle visibility" className="flex w-[21px] items-center justify-center border-r border-[#2c2c2c]">
            <Icon w={12} h={8}>
              <path d="M0.500 4C3 0.500 9 0.500 11.500 4C9 7.500 3 7.500 0.500 4Z" fill="#444" stroke="#c0c0c0" />
              <circle cx="6" cy="4" r="1.800" fill="#c8c8c8" />
            </Icon>
          </button>
          <button aria-label="Toggle lock" className="w-[21px] border-r border-[#2c2c2c]" />
          <span className="w-[5px] border-r border-[#2c2c2c] bg-[#4d80f5]" />
          <button aria-label="Expand layer" className="ml-1.5 flex w-3 items-center">
            <Icon w={7} h={8}>
              <path d="M0.500 0V8L6.500 4Z" fill="#e6e6e6" />
            </Icon>
          </button>
          <span className="ml-1 self-center border border-black bg-white">
            <Icon w={16} h={16}>
              <path d="M4 2L3 5L4 9L2 14M9 3H12V6H9ZM10 6V8M7 10C8 7 13 7 14 10C14 14 8 15 7 10M9 13H12" fill="none" stroke="#ff8e98" strokeWidth="1.200" />
            </Icon>
          </span>
          <span className="ml-[5px] flex-1 font-semibold">Layer 1</span>
          <button aria-label="Target layer" className="flex w-[20px] items-center justify-center border-l border-[#2c2c2c]">
            <Icon w={10} h={10}>
              <circle cx="5" cy="5" r="3.800" fill="none" stroke="#aeb4ba" strokeWidth="1.300" />
            </Icon>
          </button>
          <span className="mr-[3px] self-center border border-black bg-[#4d80f5]">
            <Icon w={4} h={4}>
              <path d="M0 0H4V4H0Z" fill="#4d80f5" />
            </Icon>
          </span>
          <Icon w={5} h={5}>
            <path d="M0 0H5V5Z" fill="#dcdcdc" />
          </Icon>
        </div>
      </div>
      <div className="flex h-[19px] items-center pl-[5px] text-[11px] font-semibold text-[#dcdcdc]">
        <span>1 Layer</span>
        <button aria-label="Locate Object" className="ml-auto">
          <Icon w={13} h={13}>
            <circle cx="8" cy="5" r="4" fill="none" stroke="#b4b4b4" strokeWidth="1.300" />
            <path d="M5 8L1 12" stroke="#b4b4b4" strokeWidth="1.500" />
          </Icon>
        </button>
        <button aria-label="Make Clipping Mask" className="ml-3">
          <Icon w={12} h={12}>
            <path d="M1.500 1.500H8.500V8.500H1.500Z" fill="none" stroke="#b4b4b4" strokeWidth="1.300" />
            <path d="M4 4H11V11H4Z" fill="#8a8a8a" stroke="#b4b4b4" />
            <path d="M4 4H8V8H4Z" fill="#222" />
          </Icon>
        </button>
        <button aria-label="New Sublayer" className="ml-3.5">
          <Icon w={15} h={12}>
            <path d="M1.500 0V3.500H5" fill="none" stroke="#c6c6c6" />
            <path d="M4 1.500L7 3.500L4 6ZM7 2H15V11H10V7H7Z" fill="#c6c6c6" />
            <path d="M6 8H9V11Z" fill="#c6c6c6" />
          </Icon>
        </button>
        <button aria-label="New Layer" className="ml-3">
          <NewIcon />
        </button>
        <button aria-label="Delete Layer" className="ml-3.5">
          <TrashIcon />
        </button>
        <span className="mr-px ml-4 self-end pb-px">
          <ResizeGrip />
        </span>
      </div>
      <div className="flex h-[7px] items-center justify-center border-t border-[#262626]">
        <Grip />
      </div>
    </section>
  );
}

const brushTypes = ["Calligraphic Brush", "Scatter Brush", "Art Brush", "Bristle Brush", "Pattern Brush"];

function NewBrushDialog() {
  const [type, setType] = useState("Pattern Brush");

  return (
    <section
      role="dialog"
      aria-labelledby="dialog-title"
      className="absolute top-[309px] left-1/2 w-[270px] -translate-x-1/2 overflow-hidden rounded-[5px] border border-[#8a8a8a] bg-[#494949] text-[12px] text-[#e2e2e2] shadow-[0_25px_35px_rgba(0,0,0,0.65)]"
    >
      <h2 id="dialog-title" className="h-[22px] border-b border-[#6c6c6c] bg-linear-to-b from-[#e8e8e8] to-[#b4b4b4] text-center text-[13px] leading-[22px] text-[#333]">
        New Brush
      </h2>
      <fieldset className="mt-5 px-[14px] font-semibold">
        <legend className="h-[22px] leading-[22px]">Select a new brush type:</legend>
        {brushTypes.map((name) => (
          <label key={name} className="flex h-[25px] items-center gap-1 pl-3 leading-[25px]">
            <input
              type="radio"
              name="brush"
              checked={type === name}
              onChange={() => setType(name)}
              className="size-3 appearance-none rounded-full border border-[#222] bg-linear-to-b from-[#505050] to-[#606060] checked:bg-radial checked:from-white checked:from-20% checked:to-[#444] checked:to-35% checked:outline checked:outline-[#e0843a]"
            />
            {name}
          </label>
        ))}
      </fieldset>
      <div className="mt-[17px] mb-[29px] flex items-center justify-end gap-1.5 pr-4 font-semibold">
        <button className="h-[25px] w-[90px] border border-[#262626] bg-linear-to-b from-[#636363] to-[#4e4e4e]">Cancel</button>
        <button className="h-[27px] w-[92px] border-2 border-[#262626] bg-linear-to-b from-[#727272] to-[#5a5a5a]">OK</button>
      </div>
    </section>
  );
}

export default function App() {
  return (
    <div className="relative flex h-screen flex-col overflow-hidden bg-[#1b1513] pt-[2px] pr-px font-['Open_Sans','Noto_Sans',sans-serif]">
      <TitleBar />
      <ControlBar />
      <div className="flex min-h-0 flex-1 bg-[#494949]">
        <Toolbox />
        <DocumentArea />
        <Dock />
      </div>
      <BrushesPanel />
      <LayersPanel />
      <NewBrushDialog />
    </div>
  );
}
